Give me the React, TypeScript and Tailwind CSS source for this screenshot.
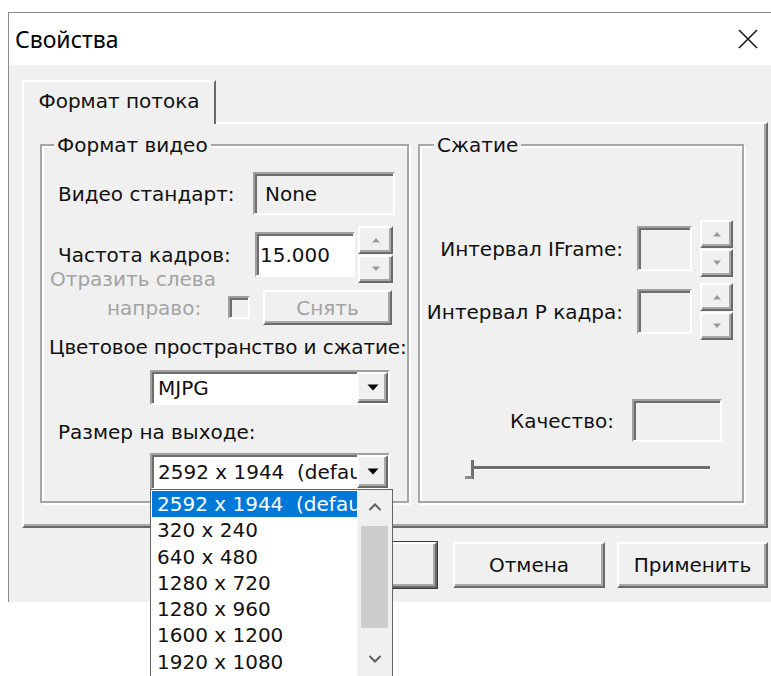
import type { ReactNode } from "react";

// classic 3D bevels, drawn at double size
const raised =
  "border-2 border-t-white border-l-white border-r-[#6a6a6a] border-b-[#6a6a6a] shadow-[inset_-2px_-2px_0_#a8a8a8] bg-[#f0f0f0]";
const sunken =
  "border-2 border-t-[#a0a0a0] border-l-[#a0a0a0] border-r-white border-b-white shadow-[inset_2px_2px_0_#6e6e6e]";
const etched =
  "border-2 border-[#a6a6a6] shadow-[inset_2px_2px_0_#ffffff,2px_2px_0_#ffffff]";

const sizes = [
  "2592 x 1944  (default)",
  "320 x 240",
  "640 x 480",
  "1280 x 720",
  "1280 x 960",
  "1600 x 1200",
  "1920 x 1080",
];

function SpinArrow({ up }: { up?: boolean }) {
  return (
    <svg width="10" height="6" viewBox="0 0 10 6">
      <path d={up ? "M1 5.5 L5 1 L9 5.5Z" : "M1 0.5 L5 5 L9 0.5Z"} fill="#9a9a9a" />
    </svg>
  );
}

function Spinner({ className }: { className: string }) {
  return (
    <div className={`flex h-[57px] flex-col justify-between ${className}`}>
      <div className={`${raised} flex h-[28px] items-center justify-center`}>
        <SpinArrow up />
      </div>
      <div className={`${raised} flex h-[28px] items-center justify-center`}>
        <SpinArrow />
      </div>
    </div>
  );
}

function Combo({ value, children }: { value: string; children?: ReactNode }) {
  return (
    <div className={`relative flex h-full w-full items-center bg-white ${sunken}`}>
      <span className="flex-1 overflow-hidden whitespace-pre pl-[6px] leading-[24px]">{value}</span>
      <div className={`${raised} flex h-full w-[31px] shrink-0 items-center justify-center`}>
        <svg width="12" height="7" viewBox="0 0 12 7">
          <path d="M0.5 0.5 L11.5 0.5 L6 6.5Z" fill="#000" />
        </svg>
      </div>
      {children}
    </div>
  );
}

function Chevron({ up }: { up?: boolean }) {
  return (
    <svg width="14" height="8" viewBox="0 0 14 8">
      <path
        d={up ? "M1.5 7 L7 1.5 L12.5 7" : "M1.5 1 L7 6.5 L12.5 1"}
        fill="none"
        stroke="#606060"
        strokeWidth="2"
      />
    </svg>
  );
}

function SizeList() {
  return (
    <div className="absolute left-[-2px] top-[calc(100%+1px)] z-20 flex h-[188px] w-[243px] border border-[#646464] bg-white">
      <div className="w-[206px] pl-[1px] pt-[1px]">
        {sizes.map((s, i) => (
          <div
            key={s}
            className={`h-[26.25px] overflow-hidden whitespace-pre pl-[5px] leading-[26px] ${
              i === 0 ? "bg-[#0078d7] text-white" : ""
            }`}
          >
            {s}
          </div>
        ))}
      </div>
      <div className="flex w-[35px] flex-col bg-[#f0f0f0]">
        <div className="flex h-[34px] items-center justify-center">
          <Chevron up />
        </div>
        <div className="mx-auto mt-[2px] h-[102px] w-[27px] bg-[#cdcdcd]" />
        <div className="mt-auto flex h-[34px] items-center justify-center">
          <Chevron />
        </div>
      </div>
    </div>
  );
}

function Button({ label, className = "" }: { label: string; className?: string }) {
  return (
    <div className={`${raised} flex h-[46px] items-center justify-center leading-[24px] ${className}`}>
      {label}
    </div>
  );
}

export default function App() {
  return (
    <div className="h-[676px] w-[771px] overflow-hidden bg-white font-['DejaVu_Sans',sans-serif] text-[20px] text-[#111]">
      <div className="ml-[8px] mt-[12px] w-[780px] border-l border-t border-[#8c8c8c]">
        {/* title bar */}
        <div className="flex h-[52px] items-center justify-between bg-white pl-[6px] pr-[30px]">
          <span className="font-['Noto_Sans',sans-serif] text-[23px] leading-[30px] text-black">Свойства</span>
          <svg width="20" height="20" viewBox="0 0 20 20">
            <path d="M1 1 L19 19 M19 1 L1 19" stroke="#1a1a1a" strokeWidth="1.6" />
          </svg>
        </div>

        {/* client area */}
        <div className="h-[537px] bg-[#f0f0f0] pl-[13px] pt-[15px]">
          <div className="relative z-10 -mb-[2px] flex h-[44px] w-[194px] items-center justify-center border-l-2 border-r-2 border-t-2 border-l-white border-r-[#6a6a6a] border-t-white bg-[#f0f0f0] pb-[4px] leading-[24px]">
            Формат потока
          </div>

          <div className="h-[406px] w-[746px] border-2 border-b-[#6a6a6a] border-l-white border-r-[#6a6a6a] border-t-white shadow-[inset_-2px_-2px_0_#a8a8a8]">
            <div className="flex gap-[9px] pl-[16px] pt-[20px]">
              {/* video format group */}
              <div className={`relative h-[359px] w-[369px] ${etched}`}>
                <span className="absolute left-[12px] top-[-13px] bg-[#f0f0f0] px-[3px] leading-[24px]">
                  Формат видео
                </span>

                <div className="mt-[26px] flex h-[43px] items-center pl-[16px]">
                  <span className="w-[195px] leading-[24px]">Видео стандарт:</span>
                  <div className={`flex h-[43px] w-[142px] items-center bg-[#f0f0f0] pl-[10px] leading-[24px] ${sunken}`}>
                    None
                  </div>
                </div>

                <div className="mt-[17px] flex h-[45px] items-center pl-[16px]">
                  <span className="w-[197px] leading-[24px]">Частота кадров:</span>
                  <div className={`flex h-[45px] w-[100px] items-center bg-white pl-[3px] leading-[24px] ${sunken}`}>
                    15.000
                  </div>
                  <Spinner className="ml-[3px] w-[35px]" />
                </div>

                <div className="-mt-[9px] text-[#a3a3a3]">
                  <div className="h-[22px] pl-[8px] leading-[22px]">Отразить слева</div>
                  <div className="flex h-[35px] items-center pl-[65px]">
                    <span className="w-[121px] leading-[24px]">направо:</span>
                    <div className={`h-[23px] w-[22px] bg-[#f0f0f0] ${sunken}`} />
                    <div className={`${raised} ml-[13px] flex h-[35px] w-[129px] items-center justify-center leading-[24px]`}>
                      Снять
                    </div>
                  </div>
                </div>

                <div className="mt-[10px] h-[24px] whitespace-nowrap pl-[7px] leading-[24px] tracking-[-0.15px]">
                  Цветовое пространство и сжатие:
                </div>
                <div className="ml-[108px] mt-[11px] h-[35px] w-[240px]">
                  <Combo value="MJPG" />
                </div>

                <div className="mt-[15px] h-[24px] pl-[16px] leading-[24px]">Размер на выходе:</div>
                <div className="ml-[108px] mt-[9px] h-[37px] w-[240px]">
                  <Combo value="2592 x 1944  (default)">
                    <SizeList />
                  </Combo>
                </div>
              </div>

              {/* compression group */}
              <div className={`relative h-[359px] w-[326px] ${etched}`}>
                <span className="absolute left-[14px] top-[-13px] bg-[#f0f0f0] px-[3px] leading-[24px]">
                  Сжатие
                </span>

                <div className="mt-[80px] flex h-[45px] items-center justify-end pr-[9px]">
                  <span className="leading-[24px]">Интервал IFrame:</span>
                  <div className={`ml-[14px] h-[45px] w-[55px] bg-[#f0f0f0] ${sunken}`} />
                  <Spinner className="ml-[8px] w-[33px]" />
                </div>

                <div className="mt-[18px] flex h-[45px] items-center justify-end pr-[9px]">
                  <span className="leading-[24px]">Интервал P кадра:</span>
                  <div className={`ml-[14px] h-[45px] w-[55px] bg-[#f0f0f0] ${sunken}`} />
                  <Spinner className="ml-[8px] w-[33px]" />
                </div>

                <div className="mt-[65px] flex h-[43px] items-center justify-end pr-[20px]">
                  <span className="leading-[24px]">Качество:</span>
                  <div className={`ml-[18px] h-[43px] w-[90px] bg-[#f0f0f0] ${sunken}`} />
                </div>

                <div className="ml-[42px] mt-[15px]">
                  <svg width="252" height="24" viewBox="0 0 252 24">
                    <rect x="12" y="9" width="236" height="3" fill="#6d6d6d" />
                    <rect x="12" y="12" width="236" height="1" fill="#ffffff" />
                    <rect x="9" y="3" width="3" height="19" fill="#707070" />
                    <rect x="3" y="19" width="7" height="3" fill="#8a8a8a" />
                  </svg>
                </div>
              </div>
            </div>
          </div>

          <div className="mt-[14px] flex pl-[263px]">
            <Button label="OK" className="w-[152px] outline outline-1 outline-[#3a3a3a]" />
            <Button label="Отмена" className="ml-[16px] w-[152px]" />
            <Button label="Применить" className="ml-[12px] w-[151px]" />
          </div>
        </div>
      </div>
    </div>
  );
}
